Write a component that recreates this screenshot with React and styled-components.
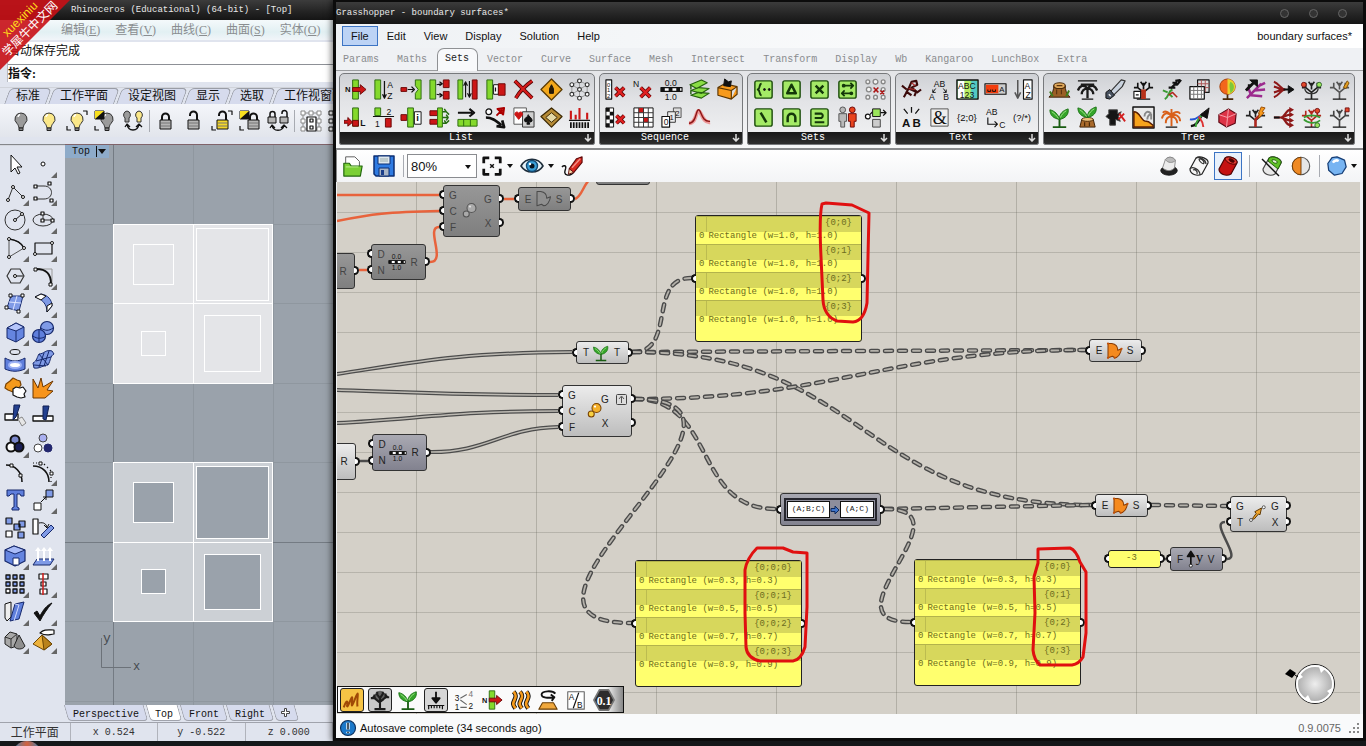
import React from "react";
import styled, { createGlobalStyle, css } from "styled-components";

/* ---------- drawing helpers ---------- */
const c = (x, y, r) => `M${x - r} ${y}a${r} ${r} 0 1 0 ${2 * r} 0a${r} ${r} 0 1 0 ${-2 * r} 0z`;
const b = (x, y, w, h) => `M${x} ${y}h${w}v${h}h${-w}z`;
const K = "#111";
const GR = "#84d92c";
const RD = "#cc1616";
const BL = "#7f9ae6";
const N = "none";
const tx = (t, x, y, s = 9, f = K, w = 400, ff = "Liberation Sans") => ({ t, x, y, s, f, w, ff });
const redX = (x, y, s) => [
  [`M${x} ${y}l${s} ${s}M${x + s} ${y}l${-s} ${s}`, N, "#5e0505", 4],
  [`M${x} ${y}l${s} ${s}M${x + s} ${y}l${-s} ${s}`, N, "#e02020", 2.4],
];
const bulb = (x, f, k = 1) => [
  [`M${x} ${3 * k + 1}a6 6 0 0 0-4 10.500c1.500 1.500 1.500 3 2 4.500h4c.5-1.500.5-3 2-4.500A6 6 0 0 0 ${x} ${3 * k + 1}z`, f, "#333", 1],
  [`M${x - 2} 19h4v2.500h-4z`, "#888", "#222", 1],
  [`M${x - 3} 8a3 3 0 0 1 2-2.500`, N, "#fff", 1.400],
];
const lock = (x, y, f, open) => [
  [open ? `M${x + 2} ${y - 4}v-1a3.500 3.500 0 0 1 7 0v5` : `M${x + 2} ${y}v-3a3.500 3.500 0 0 1 7 0v3`, N, "#111", 2],
  [b(x, y, 11, 9), f, "#111", 1],
  [`M${x + 1} ${y + 3}h9M${x + 1} ${y + 6}h9`, N, "#777", 1],
];
const brackets = [["M2 17v4h4M18 2h4v4", N, K, 1.200]];
const tree = (s) => [
  ["M12 22V14M12 15L6 10M12 15l6-5M12 12V5M6 10V5M6 10H2M18 10V5M18 10h4M12 8L9 4M12 8l3-4", N, s, 1.700],
  ["M5 22h14", N, K, 1.200],
];
const palm = (s) => [
  ["M12 21V11M12 11C8 5 3 8 2 13M12 11C11 7 5 4 3 7M12 11c1-5 7-6 9-3M12 11c4-4 9 0 9 5M12 11c-4 0-6 3-6 7M12 11c3 0 6 3 6 7M12 11V3", N, s, 2],
  ["M6 22h12", N, K, 1.200],
];
const leafy = (y) => [
  [`M12 ${y}C11 ${y - 5} 7 ${y - 9} 2 ${y - 10}c0 6 4 9 10 10zM12 ${y}c0-6 3-9 9-11 1 6-3 10-9 11z`, "#35a52a", "#1d7417", 1],
  [`M4 ${y - 8}c3 2 5 4 7 7M19 ${y - 9}c-3 2-5 4-6 7`, N, "#a3e68a", 1],
];
const greenBox = (d, fill = N, w = 2.600) => [
  ["M3 5a2 2 0 0 1 2-2h14a2 2 0 0 1 2 2v14a2 2 0 0 1-2 2H5a2 2 0 0 1-2-2z", "#a4ea66", "#1c4d0c", 1.500],
  [d, fill, "#14380a", w],
];
const can = (body, top, line) => [
  ["M3 15L9 4c4-3 13 1 12 5l-6 11c-5 3-12 0-12-5z", body, line, 1.200],
  ["M9 4c4-3 13 1 12 5-2 3-12 0-12-5z", top, line, 1],
  ["M13 5c2-1 6 1 5 3-2 1-5-1-5-3z", line, line, 1],
];

const ICONS = {
  /* list */
  item: [tx("N", 1, 15, 8, K, 700), [b(9, 2, 6, 20), GR, "#2c6b10", 1], ["M9 10h8V7l6 5-6 5v-3H9z", RD, "#6d0808", 1]],
  sort: [[b(3, 2, 6, 20), GR, "#2c6b10", 1], ["M13 3v17M11 17l2 4 2-4", N, K, 1.300], tx("A", 16, 10, 9), tx("Z", 16, 22, 9)],
  insert: [[b(1, 10, 6, 4), RD, "#6d0808", 1], ["M8 12h6M12 9l3 3-3 3", N, K, 1.300], ["M16 2h6v20h-6v-6l3-4-3-4z", GR, "#2c6b10", 1]],
  split: [[b(2, 2, 6, 20), GR, "#2c6b10", 1], ["M9 7l5-1M9 17l5 1M12 4l3 2-3 2M12 16l3 2-3 2", N, K, 1.200], [b(16, 2, 6, 8) + b(16, 14, 6, 8), RD, "#6d0808", 1]],
  weave: [[b(2, 2, 5, 20), GR, "#2c6b10", 1], ["M10 20V5M8 8l2-4 2 4M14 3v16M12 16l2 4 2-4", N, K, 1.200], [b(17, 2, 5, 20), RD, "#6d0808", 1]],
  replace: [[b(3, 2, 6, 20), GR, "#2c6b10", 1], [b(10, 7, 5, 10), "#fff", K, 1], ["M12 10v4", N, K, 1.300], [b(15, 6, 7, 12), RD, "#6d0808", 1]],
  nulls: [["M3 3l18 18M21 3C14 8 8 14 4 21", N, "#4e0404", 4], ["M3 3l18 18M21 3C14 8 8 14 4 21", N, "#d41c1c", 2.400]],
  digits: [["M12 1l11 11-11 11L1 12z", "#f3a81c", "#5a3a04", 1.300], ["M12 7l-2 4v5h4v-5z", "#2a1a04", K, 1]],
  net: [["M12 3v18M4 7l16 10M20 7L4 17M4 7l8-4 8 4v10l-8 4-8-4z", N, "#999", 1], [c(12, 3, 2) + c(12, 21, 2) + c(4, 7, 2) + c(20, 7, 2) + c(4, 17, 2) + c(20, 17, 2) + c(12, 12, 2), "#fff", "#333", 1.200]],
  length: [[b(9, 2, 6, 19), GR, "#2c6b10", 1], [b(9, 15, 6, 6), RD, "#6d0808", 1], ["M0 15h4v-3l5 5-5 4v-3H0z", RD, "#6d0808", 1], tx("L", 17, 21, 9, K, 700)],
  partition: [["M1 11h22", N, K, 1.200], [b(3, 2, 6, 8), GR, "#2c6b10", 1], [b(14, 13, 6, 9), RD, "#6d0808", 1], tx("2", 15, 9, 9), tx("1", 3, 22, 9)],
  index: [[b(1, 9, 6, 6), RD, "#6d0808", 1], [b(8, 2, 6, 20), GR, "#2c6b10", 1], ["M15 6h7v13h-7z", "#fff", K, 1], tx("i", 17, 16, 10, K, 700)],
  dispatch: [[b(2, 5, 8, 5) + b(2, 14, 8, 5), RD, "#6d0808", 1], [b(10, 2, 5, 20), GR, "#2c6b10", 1], ["M15 6h4l-2-3M15 12h6l-2-3M15 18h4l-2-3M21 12l-2 3M19 6l3 3M19 18l3-3", N, "#256b10", 1.500]],
  shift: [["M2 7h15M14 3l5 4-5 4", N, K, 2.200], [b(2, 14, 20, 7), GR, "#2c6b10", 1], ["M8 14v7M15 14v7", N, "#2c6b10", 1]],
  sift: [[c(5, 6, 3), "#fff", K, 1.300], ["M2 12c6 0 10 3 16 8M13 21l8 1-2-7", N, K, 2.800], ["M13 10l6-6M14 3l7-1-1 7z", RD, "#a00", 2]],
  cards: [["M2 2h13v17H2z", "#fff", "#555", 1], ["M11 6h12v16H11z", "#d0d0d0", "#333", 1], ["M7 14L3 9c0-4 4-3 4-1 0-2 4-3 4 1z", RD, RD, 1], ["M17 9c0 2-4 3-4 6 0 2 3 2 3.500 1l-1 3h3l-1-3c.5 1 3.500 1 3.500-1 0-3-4-4-4-6z", K, K, 1]],
  frame: [["M12 2l11 9-11 11L1 11z", "#b58a35", "#3d2a05", 1.300], ["M12 7l6 5-6 5-6-5z", "#e4d9a8", "#3d2a05", 1]],
  stats: [["M3 5v9M8 9v5M12 2v12M20 7v7", N, RD, 2.200], ["M1 15h22", N, K, 1.300], ["M3 17v6M6 17v6M9 17v6M12 17v6M15 17v6M18 17v6M21 17v6", N, K, 1.800]],
  /* sequence */
  cull: [[b(2, 2, 6, 20), "#fff", K, 1.200], tx("0", 3, 9, 6), tx("1", 3, 15, 6), tx("2", 3, 21, 6), ...redX(12, 10, 9)],
  culln: [tx("N", 1, 9, 9), ...redX(9, 10, 10)],
  range: [tx("0.0", 5, 8, 9), [b(1, 10, 22, 4), "#fff", K, 1.200], ["M1 12h4M9 12h4M17 12h4", N, K, 4], tx("1.0", 5, 23, 9)],
  series: [["M3 18l8-3 11 1-8 5zM3 13l8-3 11 1-8 5zM2 7l12-5 6 3-11 6z", "#8add45", "#26610e", 1.200], ["M3 13v4M3 7v5", N, "#26610e", 1.500]],
  random: [["M2 10l7-4 13 3-6 4zM2 10v8l14 4v-9M22 9v8l-6 5", "#f79a1c", "#5b3502", 1.200], ["M8 8l1-7 4 3 3-1-1 6z", K, K, 1]],
  cullp: [[b(2, 2, 8, 20), "#fff", K, 1], [b(2, 2, 4, 4) + b(6, 6, 4, 4) + b(2, 10, 4, 4) + b(6, 14, 4, 4) + b(2, 18, 4, 4), K, N, 0], ...redX(13, 10, 8)],
  grid: [[b(2, 2, 20, 20), "#fff", K, 1], [b(7, 2, 5, 5) + b(12, 12, 5, 5), RD, N, 0], ["M7 2v20M12 2v20M17 2v20M2 7h20M2 12h20M2 17h20", N, "#333", 1]],
  fib: [[b(14, 2, 8, 10), "#ddd", "#555", 1], tx("2", 16, 10, 8), [b(8, 6, 8, 11), "#eee", "#333", 1], tx("1", 10, 15, 8), [b(2, 11, 8, 11), "#fff", K, 1.200], tx("0", 4, 20, 9)],
  jitter: [["M1 18c8 0 7-13 10-13s4 13 12 12", N, "#e99", 4], ["M1 18c8 0 7-14 10-14s3 13 12 12", N, "#8c1616", 1.500]],
  /* sets */
  sA: [...greenBox("M10 6c-3 0-1 5-4 6 3 1 1 6 4 6", N, 2), [c(13, 12, 1) + c(18, 12, 1), K, K, 1]],
  sB: greenBox("M12 7l4.500 9h-9z"),
  sC: greenBox("M8 8l8 8M16 8l-8 8"),
  sD: [...greenBox("M9 8h9M15 5l3 3-3 3M15 16H7M9 13l-3 3 3 3", N, 1.800), [c(8, 8, 2) + c(16, 16, 2), "#14380a", N, 0]],
  sE: [[c(4, 4, 2) + c(12, 4, 2.500) + c(20, 4, 2) + c(5, 12, 2.500) + c(4, 20, 2) + c(12, 20, 2) + c(20, 12, 2) + c(20, 20, 2), "#f4f4f4", "#888", 1.400], ["M10 10l5 5M15 10l-5 5M17 13l4 4M21 13l-4 4", N, "#a11", 1.500]],
  sF: greenBox("M9 7l6 10"),
  sG: greenBox("M8 17v-5a4 4 0 0 1 8 0v5"),
  sH: greenBox("M7 8h7a2.500 2.500 0 0 1 0 4.500H7M7 17h10", N, 2.200),
  sI: [[c(7, 4, 3) + "M3 8h8v8H9v6H5v-6H3z", "#b9b9b9", "#555", 1], [c(17, 4, 3) + "M13 8h8v8h-2v6h-4v-6h-2z", "#e8431d", "#6d0808", 1]],
  sJ: [[c(4, 11, 2.500), "#fff", K, 1.300], ["M6 9l3-3M17 7h6M20 4l3 3-3 3", N, K, 1.300], [b(9, 3, 8, 8), "#9be65c", K, 1], [b(9, 14, 8, 8), "#ccc", "#444", 1]],
  /* text */
  tA: [["M4 20l5-9 3-7 5-1 1 4-6 3 5 4-2 5M7 12L2 8M9 11l9 4 4-3M6 14l6 4", N, "#3b0a0a", 2.200], ["M9 11l7 1M12 5l4 3", N, "#b03030", 1.300]],
  tB: [tx("AB", 6, 9, 9), tx("A", 1, 23, 9), tx("B", 16, 23, 9), ["M8 11l-3 4M16 11l3 4M5 12v3h3M19 12v3h-3", N, K, 1]],
  tC: [[b(1, 2, 22, 20), "#7be08c", K, 1.500], [b(2, 3, 7, 18), "#fff", N, 0], [b(9, 3, 6, 18), "#b9ee62", N, 0], [b(16, 3, 6, 18), "#53c8c4", N, 0], tx("ABC", 2, 11, 9), tx("123", 4, 21, 9)],
  tD: [[b(1, 6, 22, 11), "#ccc", K, 1.200], [b(2, 7, 13, 9), "#f23c0c", N, 0], ["M4 12v2h3v-2M9 12v2h3v-2", N, K, 1], tx("A", 16, 15, 8)],
  tE: [["M6 2v17M3 15l3 6 3-6", N, "#555", 1.600], [b(12, 2, 9, 20), "#fff", K, 1.200], tx("A", 13, 11, 9), tx("Z", 14, 21, 9)],
  tF: [tx("A", 2, 22, 12, K, 700), tx("B", 13, 22, 12, K, 700), ["M8 8L4 3M12 7V1M16 8l4-5", N, K, 1.300]],
  tG: [["M3 3h18v18H3z", "#eee", "#555", 1], tx("&", 5, 19, 19, K, 400, "Liberation Serif")],
  tH: [tx("{2;0}", 1, 16, 10)],
  tI: [tx("AB", 2, 9, 9), ["M4 12v7h10M11 16l3 3-3 3", N, K, 1.200], tx("C", 16, 23, 9)],
  tJ: [tx("(?/*)", 1, 16, 10)],
  /* tree */
  stump: [["M6 8c0 4-1 8-5 12h22c-4-4-5-8-5-12z", "#9a5f25", "#3c2006", 1], ["M6 8a6 3 0 1 0 12 0a6 3 0 1 0-12 0z", "#e0a95c", "#4b2a08", 1.200], ["M9 8h6M9 12v5M14 12v5", N, "#5c3510", 1.200], ["M2 14l3 5M22 13l-3 6", N, "#3d7d1c", 2]],
  palmcut: [["M2 3h20", N, K, 1.200], ["M12 21V11M12 11C8 6 4 8 2 13M12 11c4-5 8-3 10 2M12 11c-4 0-6 3-6 6M12 11c4 0 6 3 6 6M5 7h14", N, "#1a1a1a", 2.400], ["M6 22h12", N, K, 1.200]],
  saw: [["M5 16L18 2l4 1-3 6L9 19z", "#c9d2de", "#333", 1.200], ["M2 21v-6l4-3 5 6-5 4z", "#46505e", K, 1], ["M5 17l2 2", N, "#eee", 1.500]],
  prune: [...tree("#111"), ["M12 22V12", N, "#b8321a", 5], [b(2, 14, 7, 7), "#fff", K, 1.200], ["M4 17.500h3", N, K, 1.300]],
  vine: [["M5 22c5-3 3-8 8-10M8 15l-5-2M13 20l-4-4", N, "#3a9b33", 2], ["M11 11l4-4h3l4-5M13 5h5M9 10h7M16 3l5-1", N, K, 2.200], ["M9 18l4-3 5 5", N, "#b3261e", 1.500]],
  matrix: [[b(10, 2, 12, 13), "#ddd", K, 1.200], ["M10 6h12M10 10h12M14 2v13M18 2v13", N, "#a55", 1], [b(2, 9, 15, 13), "#fff", K, 1.300], ["M2 13h15M2 17h15M6 9v13M10 9v13M14 9v13", N, "#777", 1]],
  twotrees: [["M12 22V12M7 22h11", N, "#4b2a08", 1.800], [c(12, 9, 8), "#f3671c", "#a33d07", 1], ["M12 1a8 8 0 0 1 0 16z", "#e9d32c", N, 0], ["M15 4c5 2 5 9 0 12 0-4-2-8 0-12z", "#7dc83a", N, 0]],
  fern: [["M3 21L18 6M7 18l12 1M11 13l11-1M14 9l8-4M7 17L4 9", N, "#9c2b8e", 2.600], ["M2 13l8-8M4 8h4", N, K, 3], ["M6 2h8v7z", K, K, 1]],
  flip: [["M2 4c6 2 7 8 12 8M2 20c6-2 7-8 12-8M2 9c5 1 6 3 10 3M2 15c5-1 6-3 10-3", N, "#8e1919", 2.200], ["M12 12h7", N, K, 2], ["M17 8l6 4-6 4z", K, K, 1]],
  match: [...tree("#222"), [c(4, 7, 2.500), "#e2492b", "#711", 1], [c(20, 7, 2.500), "#9be65c", "#363", 1], ["M5 11c1 7 13 7 14 0", N, "#333", 1.400]],
  treeb: [...tree("#555"), ["M16 10l4-7 2 2-3 6z", "#e59f22", "#7a4c05", 1]],
  sprout: [["M12 22V12M5 22h14", N, "#195c12", 2], ...leafy(14)],
  graftst: [["M6 14h12l2 8H4z", "#a96a2c", "#3c2006", 1], ["M6 14a6 2 0 1 0 12 0a6 2 0 1 0-12 0z", "#ecc07a", "#4b2a08", 1], ["M9 17v4M14 17v4", N, "#4b2a08", 1.300], ...leafy(12)],
  cutter: [["M5 4h9v4l4-2-3 5 2 5-5-2v6H6v-6l-4-3 3-3z", "#151515", "#444", 1], ["M15 14l6-6M16 8l6 8", N, "#d32222", 2]],
  sunset: [[b(1, 1, 22, 22), "#e9e9e9", K, 1.500], ["M2 6c7 0 7 10 13 10 4 0 4 3 7 4v2H2z", "#f7a31d", "#5b1e02", 1.500], ["M20 14V8M20 8c-4-4-7-1-7 3M20 8c-2 1-4 3-4 6", N, "#888", 2]],
  palmred: palm("#d9601a"),
  arrows: [["M3 21c8-1 8-8 13-13", N, K, 2.500], ["M2 14c6 1 8-2 11-4", N, "#2455d6", 2], ["M8 22c0-6 3-9 6-12", N, "#3aa33a", 2], ["M16 22c0-6-3-8-5-11", N, "#d33", 2], ["M13 9l9-7-2 11z", K, K, 1]],
  gem: [["M3 9l10-6 8 5-1 10-9 4-8-5z", "#dd3346", "#5d0914", 1.200], ["M3 9l9 3 9-4M12 12l-1 10M12 12l1-9", N, "#f7a3ac", 1]],
  bolt: [...tree("#222"), ["M12 22V14l5-5", N, "#b3261e", 2.500], ["M15 8l3-7 4 1-3 4 2 1-6 6 1-5z", "#f79a1c", "#9c4d04", 1]],
  unflip: [["M2 12h7c5 0 5-8 10-8M9 12c5 0 5 8 10 8M9 12c4 0 6-3 10-3M9 12c4 0 6 3 10 3", N, "#8e1919", 2.200], ["M18 1l5 3-5 3zM18 6l5 3-5 3zM18 12l5 3-5 3zM18 17l5 3-5 3z", "#8e1919", N, 0], ["M2 12h6", N, K, 2]],
  mirror: [...tree("#b3261e"), ["M4 12c4-3 12-3 17 0M4 14c4 4 12 5 17 1", N, "#3a9b33", 1.800], [c(18, 5, 2.500), "#e2492b", "#711", 1], [c(18, 20, 2.500), "#9be65c", "#363", 1]],
  treered: [...tree("#444"), [b(18, 2, 4, 4), "#e2492b", "#711", 1]],
  /* rhino toolbar */
  bulbOff: bulb(12, "#9b9b9b"),
  bulbOn: bulb(12, "#fbe889"),
  bulbSel: [...bulb(12, "#fbe889"), ...brackets],
  bulbInv: [...bulb(14, "#9b9b9b"), [b(2, 2, 9, 8), K, K, 1], ["M2 2h9L2 10z", "#f8e020", N, 0], ["M2 17v4h4", N, K, 1.200]],
  bulbSwap: [["M6 2a4 4 0 0 0-2 7v4h4V9a4 4 0 0 0-2-7z", "#9b9b9b", "#333", 1], ["M18 2a4 4 0 0 0-2 7v4h4V9a4 4 0 0 0-2-7z", "#fbe889", "#333", 1], ["M6 15c1 8 11 8 12 0M4 18l2-3 3 3M15 18l3-3 3 3", N, K, 1.300]],
  lock: lock(6, 11, "#b5b5b5"),
  unlock: lock(6, 11, "#b5b5b5", true),
  lockSel: [...lock(7, 11, "#f6d828", true), ...brackets],
  lockInv: [...lock(10, 11, "#b5b5b5"), [b(2, 2, 9, 8), K, K, 1], ["M2 2h9L2 10z", "#f8e020", N, 0], ["M2 17v4h4", N, K, 1.200]],
  lockSwap: [["M4 8V5a2.500 2.500 0 0 1 5 0v3M16 5V4a2.500 2.500 0 0 1 5 0v4", N, K, 1.500], [b(2, 8, 8, 6) + b(14, 8, 8, 6), "#b5b5b5", K, 1], ["M6 16c1 7 11 7 12 0M4 19l2-3 3 3M15 19l3-3 3 3", N, K, 1.300]],
  points: [["M4 4h16v16H4z", N, "#888", 1], [b(2, 2, 4, 4) + b(10, 2, 4, 4) + b(18, 2, 4, 4) + b(2, 10, 4, 4) + b(18, 10, 4, 4) + b(2, 18, 4, 4) + b(18, 18, 4, 4), "#fff", "#888", 1], [b(8, 8, 9, 14) + b(11, 10, 3, 3) + b(11, 17, 3, 3), "#fff", K, 1.200]],
  points2: [[b(2, 2, 4, 4) + b(2, 10, 4, 4) + b(2, 18, 4, 4), "#fff", K, 1]],
  /* palette */
  cursor: [["M8 3v17l4-4 3 6 2-1-3-6h5z", "#fff", K, 1]],
  dot: [[c(12, 12, 2), "#fff", K, 1]],
  poly: [["M5 20l5-13 10 10", N, "#333", 1], [c(5, 20, 1.500) + c(10, 7, 1.500) + c(20, 17, 1.500), "#fff", K, 1]],
  curve: [["M5 6h8c10 0 10 13 0 13H5", N, "#333", 1], [b(3, 5, 3, 3) + b(3, 17, 3, 3) + b(17, 2, 3, 3) + b(19, 19, 3, 3), "#fff", K, 1.200]],
  circle: [[c(12, 12, 10), N, "#333", 1], ["M12 12l7-6", N, K, 1], [c(12, 12, 1.500) + c(19, 6, 1.500), "#fff", K, 1]],
  ellipse: [["M2 12a10 6 0 1 0 20 0a10 6 0 1 0-20 0zM12 12h9M12 12V6", N, "#333", 1], [b(10, 4, 3, 3) + b(10, 11, 3, 3) + b(20, 11, 3, 3), "#fff", K, 1.200]],
  arc: [["M6 3C14 4 19 8 21 12L6 21z", N, "#555", 1], ["M6 3C14 4 19 8 21 12", N, K, 1.300], [c(6, 3, 1.500) + c(21, 12, 1.500) + c(6, 21, 1.500), "#fff", K, 1]],
  rect: [[b(4, 7, 17, 11), N, K, 1.200], [c(4, 18, 1.500) + c(21, 7, 1.500), "#fff", K, 1]],
  hexa: [["M4 12l4-7h9l4 7-4 7H8z", N, "#333", 1.200], ["M12 12h8", N, K, 1], [c(12, 12, 1.500), "#fff", K, 1]],
  fillet: [["M5 5h16v16", N, "#999", 1], ["M5 5c11 0 15 5 15 15", N, K, 2], [b(3, 4, 3, 3) + b(18, 19, 3, 3), "#fff", K, 1]],
  srf: [["M8 4h12l-4 15-12-3z", BL, "#1c2f74", 1], ["M14 4l-4 14M6 10l12 1", N, "#dfe6ff", 1], [b(6, 2, 3, 3) + b(18, 2, 3, 3) + b(2, 14, 3, 3) + b(14, 18, 3, 3), "#fff", K, 1]],
  patch: [["M4 5l6-3c7 1 11 6 11 12l-5 6c0-8-5-13-12-15z", BL, "#1c2f74", 1], ["M4 5l6-3 5 2-5 4zM21 14l-5 6v-6l5-3z", "#fff", K, 1]],
  box: [["M4 8l9-5 8 4v10l-8 5-9-4z", "#6585e0", "#16286b", 1], ["M4 8l9-5 8 4-8 4z", "#b5c5fa", "#16286b", 1], ["M13 11v11", N, "#16286b", 1]],
  spheres: [[c(16, 8, 6.500), BL, "#16286b", 1.200], [c(8, 16, 6.500), "#5f7fdc", "#16286b", 1.200], ["M2 16c4 3 9 3 13 0M8 10v12M10 8c4 3 8 3 12 0", N, "#16286b", 1]],
  tube: [["M7 4a5 2.500 0 1 0 10 0a5 2.500 0 1 0-10 0z", N, K, 1], ["M2 10c7 4 13 4 20 0v11c-7 3-13 3-20 0z", "#5f7fdc", "#16286b", 1], ["M6 17a6 3 0 1 0 12 0a6 3 0 1 0-12 0z", "#fff", "#9db2f5", 2]],
  mesh: [["M8 6c5 0 7-5 13-3l2 3c-4 2-3 6-6 11-5 0-8 4-14 3l-1-5c4-2 4-6 6-9z", BL, "#16286b", 1], ["M13 5L8 19M18 3l-5 15M5 13l15-4M3 17l12 1M8 6l9 11", N, "#16286b", 1]],
  explode: [["M3 8l4-3 3-3 4 2 3 1 1 4-3 4-5 3-5-2-3-2z", "#f59a1b", "#7a4302", 1.200], ["M10 13l3-2 4 1 3-1 3 4-2 3 1 3-4 1-4-1-4-2z", "#fff", K, 1.200]],
  burst: [["M2 3l5 9 3-10 2 9 10-6-6 9 6 1-8 7H2z", "#f7941c", "#6b3600", 1]],
  trim: [["M2 10h13v6H2z", "#fff", K, 1.300], ["M11 1h6l-4 12-3 3z", "#23408f", "#101f52", 1], ["M15 15l4-2 4 6-4 3z", "#e6e6e6", "#888", 1]],
  splitp: [["M2 12h20v5H2z", "#fff", K, 1.300], ["M12 2h6l-3 14-3-1z", "#23408f", "#101f52", 1]],
  join: [[c(12, 8, 4.500), "#7986cb", K, 2], [c(8, 15, 4.500), "#fff", K, 2], [c(16, 15, 4.500), "#1b1f57", K, 2]],
  group: [[c(12, 6, 4), "#a9aff0", "#444", 1], [c(7, 16, 4), "#fff", "#444", 1], [c(17, 16, 4), "#23276e", "#23276e", 1]],
  pton: [["M3 5c9 0 16 7 16 17", N, K, 1.600], [b(7, 4, 3, 3) + b(16, 14, 3, 3), "#fff", K, 1]],
  ptoff: [["M2 6c10 0 16 7 16 16", N, K, 1.600], ["M2 3h1M5 3h1M13 4l1 1M16 7l1 1M19 10l1 1M20 17v1M20 21v1", N, K, 1.200], [b(8, 2, 3, 3) + b(19, 12, 3, 3), "#fff", K, 1]],
  text: [["M4 2h17v6h-3l-1-2h-3v13l2 1v2H9v-2l2-1V6H8L6 8H4z", "#5f7fdc", "#16286b", 1]],
  move: [[b(3, 15, 7, 7), "#fff", K, 1], [b(15, 2, 7, 7), BL, K, 1], ["M10 14l5-5M12 9h3v3", N, K, 1]],
  copy: [[b(3, 2, 6, 6) + b(11, 8, 6, 6) + b(16, 5, 6, 6) + b(15, 16, 6, 6), BL, K, 1.200], [b(3, 15, 6, 6), "#fff", K, 1.200]],
  rotate: [[b(2, 3, 5, 15), "#fff", K, 1.200], ["M8 7c5-1 7 1 8 4M13 9l3 3 2-4", N, K, 1], ["M10 19l10-10 3 3-10 10z", BL, "#16286b", 1]],
  solid: [["M2 6l9-4 11 4v11l-10 5-10-5z", "#6585e0", "#16286b", 1.200], ["M2 6l9-4 11 4-10 4z", "#a9bcf8", "#16286b", 1], [b(10, 14, 6, 7), "#fff", "#16286b", 1]],
  extrude: [["M2 21l4-6h17l-4 6z", BL, "#16286b", 1], ["M7 17V5M13 17V5M19 17V5", N, "#fff", 2], ["M4 7l3-4 3 4zM10 7l3-4 3 4zM16 7l3-4 3 4z", "#fff", N, 0]],
  array: [[b(3, 3, 4, 4) + b(10, 3, 4, 4) + b(17, 3, 4, 4) + b(3, 10, 4, 4) + b(10, 10, 4, 4) + b(17, 10, 4, 4) + b(10, 17, 4, 4) + b(17, 17, 4, 4), BL, K, 1.300], [b(3, 17, 4, 4), "#fff", K, 1.300]],
  align: [[b(8, 2, 9, 5) + b(10, 10, 5, 4) + b(9, 17, 7, 5), "#fff", K, 1.200], ["M12 1v22", N, "#c22", 1.600]],
  tools: [["M2 4l6-2v15l-4 4-2-3z", "#eee", K, 1], ["M12 4l9-2-5 17-9 2z", "#5f7fdc", "#16286b", 1], ["M12 4l4 1-5 16", N, "#cfd9ff", 1]],
  check: [["M3 13l3-2 3 5C12 10 16 5 21 3 16 9 12 15 9 21z", K, K, 1]],
  solids: [["M2 9l5-5 7 2v12l-6 2-6-4z", "#a8a8a8", "#222", 1], ["M2 9l6 2 6-5M8 11v9", N, "#333", 1], ["M16 7l6 11c-2 4-9 4-11 0z", "#8f8f8f", "#222", 1]],
  render: [["M2 16l9-9 10 9-8 6z", "#edb23b", "#6b4503", 1], ["M11 7l2 15 8-6z", "#b9821b", "#6b4503", 1], ["M9 5c4-4 8-3 14-3v4c-5 0-6 3-14-1z", "#fff", K, 1.200]],
  /* canvas toolbar */
  open: [["M4 2h10l5 5v13H4z", "#fff", "#555", 1], ["M2 9h6l2 3h12l-2 11H2z", "#7bcf35", "#22680d", 1.300], ["M4 13h14", N, "#c2f29a", 1]],
  save: [["M2 2h20v20H4l-2-2z", "#2f7be2", "#0c2f73", 1.500], [b(6, 2, 12, 8), "#dfe8ee", "#0c2f73", 1], [b(7, 14, 10, 8), "#a9b5c6", "#0c2f73", 1], [b(9, 16, 3, 5), "#1b3f8b", N, 0], ["M8 5h8M8 7h8", N, "#9aa", 1]],
  focus: [["M3 9V3h6M15 3h6v6M21 15v6h-6M9 21H3v-6", N, K, 3], ["M10 10l4 4M14 10l-4 4", N, K, 1.600]],
  eye: [["M1 12c5-9 17-9 22 0-5 8-17 8-22 0z", "#e6f3fa", "#1e2d3a", 1.600], [c(12, 12, 5.500), "#3ba0d8", "#124a73", 1.400], [c(12, 12, 2.500), "#07141f", N, 0], [c(10, 10, 1.200), "#fff", N, 0]],
  pencil: [["M1 13c2-2 5-2 4 2-1 3-2 6 2 7 3 0 6-1 7-4", N, K, 1.500], ["M9 15L17 4l6-2v6L14 19c-2 1-4-1-5-4z", "#d8281f", "#5d0909", 1.200], ["M9 15l5 4-6 2z", "#f6d9a8", "#5d0909", 1], ["M12 14l9-10", N, "#f58f86", 1.500]],
  canGhost: [["M3 17a9 5 0 1 0 18 0a9 5 0 1 0-18 0z", "#222", K, 1], ["M5 14L8 5c3-4 9-3 11 1l-1 8c-3 4-9 4-13 0z", "#ececec", "#888", 1], ["M8 5c3 4 8 4 11 1-2-4-8-5-11-1z", "#bbb", "#888", 1]],
  canWire: [["M3 15L9 4c4-3 13 1 12 5l-6 11c-5 3-12 0-12-5z", "#f6f6f6", "#222", 1.200], ["M9 4c4-2 10 2 10 6M3 15c2-3 10 0 10 6M12 5c2-1 5 2 5 4s-5-1-5-4zM6 16c2-1 5 1 4 4", N, "#333", 1.200]],
  canRed: can("#c51212", "#e03a32", "#4d0303"),
  canGreen: [...can("#e8e8e8", "#ddd", "#444"), ["M9 4c4-3 13 1 12 5l-3 6L8 7z", "#5fc027", "#225f0a", 1], ["M12 6c2-1 6 1 5 3-2 1-5-1-5-3z", "#eaf6df", "#225f0a", 1], ["M2 5l17 17", N, K, 1.400]],
  half: [[c(12, 12, 9.500), "#e6e6e6", "#555", 1.200], ["M12 2.500a9.500 9.500 0 0 0 0 19z", "#ef8a25", "#703a02", 1]],
  ball: [["M12 1l9 4 2 8-5 8-9 2-7-6-1-8 5-7z", "#77b4f2", "#153d75", 1.500], ["M7 8c2-3 5-3 7-2", N, "#fff", 3]],
  info: [[c(12, 12, 10), "#1b78c9", "#0b2f5c", 1.500], ["M12 5v9M12 17v2", N, "#fff", 4.500], ["M12 5v9M12 17v2", N, "#123", 2]],
  sketch: [["M3 20c2-6 4-8 4-5s-1 4 0 4 4-10 5-10-1 9 0 9 5-13 6-13-1 10 0 14", N, "#a04a06", 2.200]],
  darktree: [["M12 22V10M12 15l-6-5M12 14l6-5M6 10V6M6 10H2M18 9V5M18 9h4M12 10L8 5M12 10l4-6M9 7V3M15 6V3M4 8l3 2M20 7l-3 3M6 22h12", N, "#1c1c1c", 2.300], [c(12, 8, 6), "rgba(30,30,30,.6)", N, 0]],
  down: [["M12 3v10M8 10l4 5 4-5z", K, K, 2], ["M3 18h18M4 18v4M7 18v3M10 18v3M13 18v3M16 18v3M19 18v4", N, K, 1.300]],
  nums: [tx("3", 2, 13, 9), tx("4", 17, 9, 9, "#777"), tx("1", 2, 23, 9), tx("2", 17, 22, 9), ["M8 10l7-4M8 12l7 5M8 20h7", N, "#666", 1.200]],
  waves: [["M5 3c3 3 3 5 1 9s-2 5 1 9M12 3c3 3 3 5 1 9s-2 5 1 9M19 3c3 3 3 5 1 9s-2 5 1 9", N, K, 5], ["M5 3c3 3 3 5 1 9s-2 5 1 9M12 3c3 3 3 5 1 9s-2 5 1 9M19 3c3 3 3 5 1 9s-2 5 1 9", N, "#f59a1b", 3]],
  swirl: [["M20 5c-3-4-15-3-15 1s8 4 13 3M15 6l4 3-3 4", N, K, 2], ["M6 15h12l4 7H2z", "#f0a83c", "#6b3e04", 1.200]],
  ab: [["M3 3h18v19H3z", "#fff", "#666", 1.200], tx("A", 4, 12, 9), tx("B", 13, 21, 9), ["M15 4L9 21", N, K, 1.300]],
  hexnum: [["M7 1h10l6 11-6 11H7L1 12z", "#2c2c2c", "#777", 1.800], tx("0.1", 4, 17, 13, "#fff", 700, "Liberation Serif")],
  /* node glyphs */
  scale: [[c(14, 8, 6), "#f5b02a", "#7a4302", 1.400], [c(7, 16, 4), "#f8d040", "#7a4302", 1.400], [c(12, 6, 1.500), "#fff", N, 0]],
  scaleOff: [[c(14, 8, 6), "#aaa", "#555", 1.400], [c(7, 16, 4), "#aaa", "#555", 1.400], [c(12, 6, 1.500), "#ddd", N, 0]],
  bsrf: [["M4 2h5c6 1 8 5 8 9l5-2c-1 7-5 12-9 12l-3-2-6 2z", "#f58a1f", "#8a3d05", 1.400], [c(4, 21, 1.500) + c(4, 2, 1.500) + c(22, 9, 1.500) + c(13, 21, 1.500), "#c2500a", N, 0]],
  bsrfOff: [["M4 2h5c6 1 8 5 8 9l5-2c-1 7-5 12-9 12l-3-2-6 2z", "#8f8f8f", "#4a4a4a", 1.400]],
  moveTo: [["M6 18l5-7-2-2 9-5-2 9-2-1-6 7z", "#f0a52c", "#5b3502", 1.300], [c(4, 20, 2) + c(21, 3, 2), "#fff", "#555", 1.300]],
  unity: [["M7 19V7M3 9l4-6 4 6z", K, K, 2], [c(7, 20, 1.800), "#fff", K, 1], tx("y", 13, 15, 18, K, 400, "Liberation Serif")],
};

const Svg = styled.svg`
  display: block;
  flex: none;
  width: ${(p) => p.$size}px;
  height: ${(p) => p.$size}px;
`;

function Icon({ name, size = 22 }) {
  return (
    <Svg viewBox="0 0 24 24" $size={size} aria-hidden="true">
      {ICONS[name].map((s, i) =>
        s.t !== undefined ? (
          <text key={i} x={s.x} y={s.y} fontSize={s.s} fill={s.f} fontWeight={s.w} fontFamily={s.ff}>{s.t}</text>
        ) : (
          <path key={i} d={s[0]} fill={s[1]} stroke={s[2]} strokeWidth={s[3]} strokeLinejoin="round" />
        )
      )}
    </Svg>
  );
}

/* ---------- shared styles ---------- */
const Global = createGlobalStyle`
  *, *::before, *::after { box-sizing: border-box; }
  body { margin: 0; background: #101010; font-family: "Liberation Sans", "Noto Sans CJK SC", sans-serif; font-size: 11px; color: #111; }
  button, input, select { font: inherit; color: inherit; margin: 0; padding: 0; border: 0; background: none; }
`;
const mono = css`
  font-family: "Liberation Mono", "Noto Sans CJK SC", monospace;
  font-size: 10px;
`;
const song = css`
  font-family: "Liberation Serif", "Noto Sans CJK SC", serif;
  font-size: 12px;
`;

const Desktop = styled.div`
  display: flex;
  flex-direction: column;
  min-height: 100vh;
  overflow: hidden;
`;
const Windows = styled.div`
  display: flex;
  flex: 1;
`;
const Taskbar = styled.footer`
  position: relative;
  height: 5px;
  overflow: hidden;
  background: #15181a;
`;
const Orb = styled.span`
  display: block;
  width: 30px;
  height: 30px;
  margin-left: 12px;
  border-radius: 50%;
  background: radial-gradient(circle at 50% 10%, #d8603a, #4d7fa8 40%, #9fc4dc 60%);
`;

/* ---------- Rhino window ---------- */
const Rhino = styled.section`
  position: relative;
  display: flex;
  flex-direction: column;
  flex: 0 0 333px;
  min-width: 0;
  overflow: hidden;
  background: #e0e4ee;
`;
const Title = styled.header`
  ${mono}
  font-size: 9px;
  display: flex;
  align-items: center;
  justify-content: space-between;
  height: ${(p) => p.$h}px;
  padding-left: ${(p) => p.$pad}px;
  color: #e8e8e8;
  white-space: nowrap;
  background: linear-gradient(#3c3c3c, #232323 60%, #151515);
`;
const RhinoMenu = styled.nav`
  ${song}
  display: flex;
  align-items: center;
  gap: 15px;
  height: 20px;
  padding-left: 61px;
  background: linear-gradient(#f4f9fb, #e2f0f3 60%, #f1f5f9);
  color: #8a8d90;
  white-space: nowrap;
`;
const PlainButton = styled.button`
  line-height: 16px;
  white-space: nowrap;
`;
const Command = styled.div`
  margin: 2px 0 5px 7px;
  border-left: 1px solid #b6bac2;
  background: #fff;
  ${song}
`;
const History = styled.div`
  height: 23px;
  line-height: 19px;
  border-bottom: 1px solid #8d9096;
`;
const Prompt = styled.label`
  display: flex;
  align-items: center;
  gap: 2px;
  height: 17px;
  font-weight: 700;
  line-height: 14px;
  input {
    flex: 1;
    min-width: 0;
    outline: 0;
  }
`;
const RhinoTabs = styled.div`
  ${song}
  display: flex;
  flex: none;
  height: 17px;
  padding-left: 7px;
  gap: 2px;
  border-top: 1px solid #d0d3da;
`;
const RhinoTab = styled.button`
  position: relative;
  flex: none;
  height: 16px;
  padding: 0 9px;
  line-height: 16px;
  z-index: 0;
  &::before {
    content: "";
    position: absolute;
    inset: 0;
    z-index: -1;
    border: 1px solid #9a9da6;
    border-bottom: 0;
    border-radius: 5px 5px 0 0;
    background: #d6dbed;
    transform: skewX(-20deg);
  }
`;
const RhinoTools = styled.div`
  display: flex;
  align-items: center;
  flex: none;
  height: 33px;
  margin-bottom: 7px;
  padding-left: 7px;
  background: linear-gradient(#f4f6fa, #e2e5ec);
`;
const ToolButton = styled.button`
  position: relative;
  display: flex;
  flex: none;
  align-items: center;
  justify-content: center;
  width: 28px;
  height: 28px;
  ${(p) => p.$flyout && css`
    &::after {
      content: "";
      position: absolute;
      right: 0;
      bottom: 0;
      border: 3px solid transparent;
      border-right-color: #666;
      border-bottom-color: #666;
    }
  `}
`;
const Rule = styled.span`
  flex: none;
  width: 1px;
  height: 22px;
  margin: 0 ${(p) => p.$m || 3}px;
  background: #a8abb2;
`;
const RhinoBody = styled.div`
  display: flex;
  flex: 1;
  min-height: 0;
`;
const Palette = styled.aside`
  flex: none;
  width: 65px;
  padding: 4px 0 0 1px;
  border-top: 2px groove #d5d8df;
`;
const PaletteGrid = styled.div`
  display: grid;
  grid-template-columns: 28px 28px;
  grid-auto-rows: 28px;
`;
const ViewColumn = styled.div`
  display: flex;
  flex-direction: column;
  flex: 1;
  min-width: 0;
`;
const Viewport = styled.div`
  position: relative;
  flex: 1;
  background: #9aa2ab;
  border-top: 1px solid #80636a;
`;
const ViewSvg = styled.svg`
  position: absolute;
  inset: 0;
  width: 100%;
  height: 100%;
`;
const ViewLabel = styled.button`
  ${mono}
  position: relative;
  display: flex;
  align-items: center;
  gap: 6px;
  height: 13px;
  padding: 0 3px 0 7px;
  background: #8eabc9;
`;
const ViewTabs = styled.div`
  ${mono}
  display: flex;
  height: 17px;
  padding-left: 1px;
  gap: 2px;
`;
const ViewTab = styled.button`
  position: relative;
  height: 16px;
  padding: 2px 7px 0;
  z-index: 0;
  &::before {
    content: "";
    position: absolute;
    inset: 0;
    z-index: -1;
    border: 1px solid #a0a3ac;
    border-top: 0;
    border-radius: 0 0 4px 4px;
    background: ${(p) => (p.$on ? "#fff" : "#d6dbed")};
    transform: skewX(16deg);
  }
`;
const RhinoStatus = styled.div`
  ${mono}
  display: flex;
  flex: none;
  height: 19px;
  border-top: 1px solid #a0a3ac;
  color: #333;
`;
const StatusCell = styled.span`
  display: flex;
  align-items: center;
  justify-content: center;
  width: ${(p) => p.$w}px;
  border-right: 1px solid #b0b3bb;
  font-size: ${(p) => (p.$cjk ? 12 : 10)}px;
`;
const Watermark = styled.div`
  position: absolute;
  top: 0;
  left: 0;
  width: 70px;
  height: 70px;
  overflow: hidden;
  clip-path: polygon(0 0, 100% 0, 0 100%);
  background: rgba(200, 16, 22, 0.9);
`;
const Ribbon = styled.div`
  position: absolute;
  top: 10px;
  left: -25px;
  width: 100px;
  text-align: center;
  line-height: 14px;
  font-size: 12px;
  color: #fff;
  transform: rotate(-45deg);
  span {
    display: block;
    color: #ffdf1b;
  }
`;

/* ---------- Grasshopper window ---------- */
const Hopper = styled.section`
  display: flex;
  flex-direction: column;
  flex: 1;
  min-width: 0;
  position: relative;
  border: solid #0c0c0c;
  border-width: 2px 3px 3px 3px;
  box-shadow: -2px 0 6px rgba(0, 0, 0, 0.5);
  background: #f0f2f4;
`;
const WinButtons = styled.div`
  display: flex;
  gap: 20px;
  padding-right: 16px;
`;
const WinButton = styled.button`
  width: 9px;
  height: 9px;
  border: 1px solid #666;
  border-radius: 50%;
  background: #333;
`;
const HopperMenu = styled.nav`
  display: flex;
  align-items: center;
  height: 24px;
  padding-left: 6px;
  background: linear-gradient(90deg, #eef1f4, #fff 80%);
`;
const MenuItem = styled.button`
  height: 20px;
  padding: 0 8px;
  border: 1px solid ${(p) => (p.$on ? "#3c74c4" : "transparent")};
  background: ${(p) => (p.$on ? "#bcd3f5" : "none")};
`;
const DocName = styled.span`
  margin-left: auto;
  padding-right: 11px;
`;
const Tabs = styled.div`
  ${mono}
  display: flex;
  align-items: flex-end;
  height: 23px;
  border-bottom: 1px solid #9a9c9e;
  background: #eff1f4;
`;
const Tab = styled.button`
  flex: none;
  height: 22px;
  padding: 0 11px 0 7px;
  color: #8a8c8f;
  ${(p) => p.$on && css`
    height: 23px;
    margin: 0 2px -1px -1px;
    padding: 0 8px 4px 7px;
    color: #222;
    background: #f8f9fb;
    border: 1px solid #8f9194;
    border-bottom: 0;
    border-radius: 7px 7px 0 0;
  `}
`;
const Groups = styled.div`
  display: flex;
  gap: 4px;
  height: 79px;
  padding: 2px 3px 0 3px;
  border-bottom: 2px solid #888a8c;
  background: linear-gradient(#e4e5e8, #f6f7f8);
`;
const Group = styled.section`
  display: flex;
  flex-direction: column;
  flex: none;
  height: 72px;
  border: 1px solid #77797c;
  border-radius: 5px 5px 2px 2px;
  overflow: hidden;
  background: linear-gradient(#cfd1d5, #e3e4e7 40%, #f2f3f4);
`;
const GroupGrid = styled.div`
  display: grid;
  grid-template-columns: repeat(${(p) => p.$cols}, 28px);
  grid-auto-rows: 28px;
  padding: 1px 1px 0;
`;
const GroupName = styled.h2`
  ${mono}
  position: relative;
  margin: auto 0 0;
  height: 12px;
  line-height: 11px;
  font-weight: 400;
  text-align: center;
  padding-right: 12px;
  color: #fff;
  background: linear-gradient(#181818, #2e2e2e);
  svg {
    position: absolute;
    right: 2px;
    top: 2px;
  }
`;
const ToolBar = styled.div`
  display: flex;
  align-items: center;
  height: 32px;
  padding: 0 3px 0 1px;
  border-left: 1px solid #888;
  background: linear-gradient(#fff, #f3f4f6);
`;
const BarButton = styled.button`
  display: flex;
  align-items: center;
  justify-content: center;
  gap: 4px;
  height: 28px;
  padding: 0 ${(p) => p.$p || 3}px;
  border: 1px solid ${(p) => (p.$on ? "#3c74c4" : "transparent")};
  background: ${(p) => (p.$on ? "#e9f1fb" : "none")};
`;
const ZoomField = styled.label`
  position: relative;
  width: 70px;
  select {
    appearance: none;
    display: block;
    width: 100%;
    height: 24px;
    padding-left: 3px;
    border: 1px solid #8a8c90;
    border-radius: 0;
    background: #fff;
    font-size: 13px;
  }
  svg {
    position: absolute;
    right: 6px;
    top: 11px;
  }
`;
const Push = styled.span`
  margin-left: auto;
`;
const Canvas = styled.main`
  position: relative;
  flex: 1;
  margin-right: 3px;
  margin-left: 1px;
  overflow: hidden;
  background-color: #d4d0c8;
  background-image: linear-gradient(90deg, rgba(90, 90, 80, 0.28) 1px, transparent 1px),
    linear-gradient(rgba(90, 90, 80, 0.24) 1px, transparent 1px);
  background-size: 120px 40px;
  background-position: 79px 30px;
`;
const Layer = styled.svg`
  position: absolute;
  inset: 0;
  width: 100%;
  height: 100%;
  pointer-events: none;
`;
const FILL = {
  off: "linear-gradient(#979797, #7f7f7f)",
  on: "linear-gradient(#ececec, #bdbdbd)",
  hidden: "linear-gradient(#a9a9b2, #82828f)",
};
const NodeBox = styled.div`
  position: absolute;
  left: ${(p) => p.$x}px;
  top: ${(p) => p.$y}px;
  width: ${(p) => p.$w}px;
  height: ${(p) => p.$h}px;
  display: flex;
  align-items: stretch;
  justify-content: space-between;
  padding: 1px 0;
  border: 1px solid #333;
  border-radius: 3px;
  background: ${(p) => FILL[p.$tone]};
  color: ${(p) => (p.$tone === "off" ? "#444" : "#222")};
  font-size: 10px;
`;
const Ports = styled.div`
  display: flex;
  flex: none;
  flex-direction: column;
  width: ${(p) => (p.$out ? 22 : 18)}px;
`;
const Port = styled.span`
  position: relative;
  display: flex;
  flex: 1;
  align-items: center;
  justify-content: center;
  gap: 7px;
  ${(p) => p.$wide && css`margin-left: -12px;`}
  &::after {
    content: "";
    position: absolute;
    ${(p) => p.$side}: -5px;
    top: calc(50% - 5px);
    width: 5px;
    height: 9px;
    border: 2px solid #111;
    border-${(p) => (p.$side === "left" ? "right" : "left")}: 0;
    border-radius: ${(p) => (p.$side === "left" ? "5px 0 0 5px" : "0 5px 5px 0")};
    background: #fff;
  }
`;
const Glyph = styled.div`
  display: flex;
  align-items: center;
  margin: 0 -5px;
`;
const PanelBox = styled.div`
  ${mono}
  font-size: 9px;
  position: absolute;
  left: ${(p) => p.$x}px;
  top: ${(p) => p.$y}px;
  width: ${(p) => p.$w}px;
  height: ${(p) => p.$h}px;
  border: 1px solid #222;
  border-radius: 3px;
  background: #ffff6e;
  color: #6c6c20;
  white-space: nowrap;
`;
const PathRow = styled.div`
  height: 16px;
  line-height: 12px;
  padding-right: 9px;
  text-align: right;
  border-top: 1px solid #b3b34c;
  background: linear-gradient(90deg, transparent 10px, #bcbc50 10px, #bcbc50 11px, transparent 11px), #d7d75c;
`;
const ItemRow = styled.div`
  height: 12px;
  line-height: 9px;
  padding-left: 3px;
  span {
    padding-left: 4px;
  }
`;
const Short = styled.div`
  text-align: center;
  line-height: 15px;
  padding-right: 6px;
`;
const Mapper = styled.div`
  display: flex;
  align-items: center;
  flex: 1;
  margin: 3px;
  padding: 1px;
  border: 2px solid #26262e;
  background: #8e8e9c;
`;
const MapField = styled.span`
  ${mono}
  font-size: 8px;
  flex: ${(p) => p.$grow} 0 0;
  height: 17px;
  line-height: 14px;
  text-align: center;
  border: 1px solid #111;
  background: #fff;
`;
const Dock = styled.div`
  position: absolute;
  left: 0;
  bottom: 1px;
  display: flex;
  align-items: center;
  width: 287px;
  height: 27px;
  border: 1px solid #111;
  background: linear-gradient(90deg, #fafafa 94%, #888);
`;
const DockButton = styled.button`
  display: flex;
  flex: none;
  align-items: center;
  justify-content: center;
  width: 24px;
  height: 24px;
  margin: 0 2px;
  border-radius: 3px;
  border: 1px solid ${(p) => (p.$bg ? "#222" : "transparent")};
  background: ${(p) => p.$bg || "none"};
`;
const Compass = styled.svg`
  position: absolute;
  right: 22px;
  bottom: 7px;
  width: 56px;
  height: 46px;
`;
const Status = styled.footer`
  display: flex;
  align-items: center;
  gap: 3px;
  height: 24px;
  padding: 4px 3px 0;
  background: #f9fafb;
`;
const Version = styled.span`
  margin-left: auto;
  margin-right: 5px;
  color: #666;
`;
const EdgePorts = styled.div`
  position: absolute;
  inset: 0;
  display: flex;
  justify-content: space-between;
`;

/* ---------- data ---------- */
const GROUPS = [
  ["List", 9, "item sort insert split weave replace nulls digits net length partition index dispatch shift sift cards frame stats"],
  ["Sequence", 5, "cull culln range series random cullp grid fib jitter"],
  ["Sets", 5, "sA sB sC sD sE sF sG sH sI sJ"],
  ["Text", 5, "tA tB tC tD tE tF tG tH tI tJ"],
  ["Tree", 11, "stump palmcut saw prune vine matrix twotrees fern flip match treeb sprout graftst cutter sunset palmred arrows gem bolt unflip mirror treered"],
];
const PALETTE =
  "cursor dot poly curve circle ellipse arc rect hexa fillet srf patch box spheres tube mesh explode burst trim splitp join group pton ptoff text move copy rotate solid extrude array align tools check solids render".split(" ");
const NO_FLYOUT = ["cursor", "explode", "burst", "trim", "splitp", "group", "pton", "text", "copy", "rotate"];

const SOLID = [
  "M0 192C80 180 120 171 235 170",
  "M0 208C70 210 120 213 221 213",
  "M0 241C80 237 120 229 221 229",
  "M92 270C150 271 165 246 221 245",
];
const DASHED = [
  "M296 170C340 170 310 96 354 96",
  "M296 170L748 168",
  "M296 170C530 170 520 323 754 323",
  "M298 217C500 217 548 168 748 168",
  "M298 217C380 217 355 327 439 327",
  "M298 217C468 217 126 441 294 441",
  "M548 327L754 323",
  "M548 327C636 327 484 440 573 440",
  "M815 323L889 324",
];
const ORANGE = [
  "M0 13L102 13",
  "M0 39C35 32 50 30 102 29",
  "M93 80C110 80 88 45 102 45",
  "M22 88H30",
  "M167 17H177",
  "M238 17C245 14 245 6 252 -2",
];
const MARKS = [
  "M485 22L489 21L515 23L532 31L531 75L530 121Q527 139 516 140L500 139Q487 134 486 118L484 75Q482 35 485 22Z",
  "M420 366L446 366L456 370L470 371L470 425L468 465Q464 478 456 479L423 479Q410 476 409 465L408 431L408 388Q410 376 420 366Z",
  "M701 367L733 366Q739 368 743 380L749 390L749 451L746 475Q742 482 735 483L703 483Q697 478 696 468L698 431L697 395L701 381Z",
];

const Arrow = () => (
  <svg width="6" height="4" viewBox="0 0 6 4" aria-hidden="true"><path d="M0 0h6L3 4z" fill="#111" /></svg>
);

function Node({ x, y, w, h, tone = "on", ins = [], outs = [], icon, size = 18, graft }) {
  return (
    <NodeBox $x={x} $y={y} $w={w} $h={h} $tone={tone}>
      <Ports>{ins.map((l, i) => <Port key={i} $side="left">{l}</Port>)}</Ports>
      <Glyph>{icon && <Icon name={icon} size={size} />}</Glyph>
      <Ports $out>
        {outs.map((l, i) => (
          <Port key={i} $side="right" $wide={graft}>
            {l}
            {graft && (
              <svg width="11" height="11" viewBox="0 0 11 11" aria-hidden="true" visibility={i ? "hidden" : "visible"}>
                <rect x=".5" y=".5" width="10" height="10" rx="1" fill="#ddd" stroke="#444" />
                <path d="M5.500 9V3M3 5l2.500-3L8 5" fill="none" stroke="#555" />
              </svg>
            )}
          </Port>
        ))}
      </Ports>
    </NodeBox>
  );
}

function Panel({ x, y, rows }) {
  return (
    <PanelBox $x={x} $y={y} $w={167} $h={127}>
      {rows.map(([path, v]) => (
        <React.Fragment key={path}>
          <PathRow>{path}</PathRow>
          <ItemRow>0<span>Rectangle (w={v}, h={v})</span></ItemRow>
        </React.Fragment>
      ))}
      <EdgePorts><Port $side="left" /><Port $side="right" /></EdgePorts>
    </PanelBox>
  );
}

const RHINO_TOOLS = ["bulbOff", "bulbOn", "bulbSel", "bulbInv", "bulbSwap", "|", "lock", "unlock", "lockSel", "lockInv", "lockSwap", "|", "points", "points2"];

function RhinoWindow() {
  return (
    <Rhino>
      <Title $h={20} $pad={71}>Rhinoceros (Educational) (64-bit) - [Top]</Title>
      <RhinoMenu>
        {[["编辑", "E"], ["查看", "V"], ["曲线", "C"], ["曲面", "S"], ["实体", "O"]].map(([n, k]) => (
          <PlainButton key={n}>{n}(<u>{k}</u>)</PlainButton>
        ))}
      </RhinoMenu>
      <Command>
        <History>自动保存完成</History>
        <Prompt>指令:<input aria-label="指令" /></Prompt>
      </Command>
      <RhinoTabs>
        {["标准", "工作平面", "设定视图", "显示", "选取", "工作视窗配置"].map((t) => <RhinoTab key={t}>{t}</RhinoTab>)}
      </RhinoTabs>
      <RhinoTools>
        {RHINO_TOOLS.map((n, i) =>
          n === "|" ? <Rule key={i} $m={2} /> : <ToolButton key={n} aria-label={n}><Icon name={n} size={24} /></ToolButton>
        )}
      </RhinoTools>
      <RhinoBody>
        <Palette>
          <PaletteGrid>
            {PALETTE.map((n) => (
              <ToolButton key={n} aria-label={n} $flyout={!NO_FLYOUT.includes(n)}><Icon name={n} size={24} /></ToolButton>
            ))}
          </PaletteGrid>
        </Palette>
        <ViewColumn>
          <Viewport>
            <ViewSvg aria-hidden="true">
              <path d="M0 79.500H268M0 158.500H268M0 238.500H268M0 317.500H268M0 476.500H268M128.500 0V560M208.500 0V560M0 556.500H268" stroke="#8f979f" />
              <path d="M48.500 0V560M0 397.500H268" stroke="#747b83" />
              <rect x="48.500" y="79.500" width="159" height="159" fill="#e4e5e8" stroke="#fff" />
              <rect x="48.500" y="317.500" width="159" height="159" fill="#ccd0d5" stroke="#fff" />
              <path d="M128.500 79V238M48 158.500H207M128.500 317V476M48 397.500H207" stroke="#fff" />
              <g fill="none" stroke="#fff">
                <rect x="68.500" y="99.500" width="40" height="40" /><rect x="131.500" y="83.500" width="72" height="72" />
                <rect x="76.500" y="186.500" width="24" height="24" /><rect x="139.500" y="170.500" width="56" height="56" />
              </g>
              <g fill="#9aa2ab" stroke="#fff">
                <rect x="68.500" y="337.500" width="40" height="40" /><rect x="131.500" y="321.500" width="72" height="72" />
                <rect x="76.500" y="424.500" width="24" height="24" /><rect x="139.500" y="409.500" width="56" height="55" />
              </g>
              <path d="M36.500 493V522.500H66" fill="none" stroke="#6c7279" />
              <text x="38" y="497" fontSize="13" fontFamily="Liberation Mono" fill="#44494e">y</text>
              <text x="68" y="525" fontSize="12" fontFamily="Liberation Mono" fill="#44494e">x</text>
            </ViewSvg>
            <ViewLabel>Top<svg width="10" height="11" viewBox="0 0 10 11" aria-hidden="true"><path d="M.5 0v11" stroke="#111" /><path d="M2 3h8L6 8z" fill="#111" /></svg></ViewLabel>
          </Viewport>
          <ViewTabs>
            {["Perspective", "Top", "Front", "Right"].map((t) => <ViewTab key={t} $on={t === "Top"}>{t}</ViewTab>)}
            <ViewTab aria-label="New viewport">
              <svg width="9" height="9" viewBox="0 0 9 9" aria-hidden="true"><path d="M3.500.5h2v3h3v2h-3v3h-2v-3h-3v-2h3z" fill="#fff" stroke="#444" /></svg>
            </ViewTab>
          </ViewTabs>
        </ViewColumn>
      </RhinoBody>
      <RhinoStatus>
        <StatusCell $w={71} $cjk>工作平面</StatusCell>
        <StatusCell $w={88}>x 0.524</StatusCell>
        <StatusCell $w={88}>y -0.522</StatusCell>
        <StatusCell $w={88}>z 0.000</StatusCell>
      </RhinoStatus>
      <Watermark><Ribbon><span>xuexiniu</span>学犀牛中文网</Ribbon></Watermark>
    </Rhino>
  );
}

const DOCK = [
  ["sketch", "#f6c445"], ["darktree", "#c9c9c9"], ["sprout"], ["down", "#d6d6d6"], ["nums"],
  ["item"], ["waves"], ["swirl"], ["ab"], ["hexnum"],
];
const VALUES = ["0.3", "0.5", "0.7", "0.9"];

export default function App() {
  return (
    <Desktop>
      <Global />
      <Windows>
        <RhinoWindow />
        <Hopper>
          <Title $h={22} $pad={0}>
            Grasshopper - boundary surfaces*
            <WinButtons>
              <WinButton aria-label="Minimize" /><WinButton aria-label="Maximize" /><WinButton aria-label="Close" />
            </WinButtons>
          </Title>
          <HopperMenu>
            {["File", "Edit", "View", "Display", "Solution", "Help"].map((m) => <MenuItem key={m} $on={m === "File"}>{m}</MenuItem>)}
            <DocName>boundary surfaces*</DocName>
          </HopperMenu>
          <Tabs>
            {["Params", "Maths", "Sets", "Vector", "Curve", "Surface", "Mesh", "Intersect", "Transform", "Display", "Wb", "Kangaroo", "LunchBox", "Extra"].map((t) => (
              <Tab key={t} $on={t === "Sets"}>{t}</Tab>
            ))}
          </Tabs>
          <Groups>
            {GROUPS.map(([name, cols, icons]) => (
              <Group key={name}>
                <GroupGrid $cols={cols}>
                  {icons.split(" ").map((n) => <ToolButton key={n} aria-label={n}><Icon name={n} size={23} /></ToolButton>)}
                </GroupGrid>
                <GroupName>
                  {name}
                  <svg width="8" height="8" viewBox="0 0 8 8" aria-hidden="true"><path d="M4 0v7M1 4l3 3 3-3" fill="none" stroke="#ddd" strokeWidth="1.500" /></svg>
                </GroupName>
              </Group>
            ))}
          </Groups>
          <ToolBar>
            <BarButton aria-label="Open"><Icon name="open" size={22} /></BarButton>
            <BarButton aria-label="Save"><Icon name="save" size={24} /></BarButton>
            <Rule $m={3} />
            <ZoomField>
              <select aria-label="Zoom" defaultValue="80%"><option>80%</option></select>
              <Arrow />
            </ZoomField>
            <BarButton aria-label="Zoom extents"><Icon name="focus" size={22} /><Arrow /></BarButton>
            <BarButton aria-label="Preview" $p={2}><Icon name="eye" size={24} /><Arrow /></BarButton>
            <BarButton aria-label="Sketch"><Icon name="pencil" size={22} /></BarButton>
            <Push />
            <BarButton aria-label="No preview"><Icon name="canGhost" size={22} /></BarButton>
            <BarButton aria-label="Wireframe" $p={2}><Icon name="canWire" size={24} /></BarButton>
            <BarButton aria-label="Shaded" $on $p={1}><Icon name="canRed" size={24} /></BarButton>
            <Rule $m={7} />
            <BarButton aria-label="Selected only" $p={2}><Icon name="canGreen" size={24} /></BarButton>
            <BarButton aria-label="Document preview" $p={2}><Icon name="half" size={22} /></BarButton>
            <Rule $m={4} />
            <BarButton aria-label="Mesh quality" $p={2}><Icon name="ball" size={20} /><Arrow /></BarButton>
          </ToolBar>
          <Canvas>
            <Layer aria-hidden="true">
              <g fill="none">
                {ORANGE.map((d) => <path key={d} d={d} stroke="#e8633c" strokeWidth="2.500" />)}
                {SOLID.map((d) => (
                  <g key={d}><path d={d} stroke="#4c4c4c" strokeWidth="4" /><path d={d} stroke="#bdbab3" strokeWidth="1.500" /></g>
                ))}
                {DASHED.map((d) => (
                  <g key={d} strokeLinecap="round" strokeDasharray="7 7">
                    <path d={d} stroke="#4a4a4a" strokeWidth="4.500" /><path d={d} stroke="#b5b2ab" strokeWidth="1.800" />
                  </g>
                ))}
                <path d="M22 279H31M890 377C906 377 872 340 888 340M826 377H829" stroke="#4c4c4c" strokeWidth="2.500" />
              </g>
            </Layer>
            <Node x={106} y={3} w={57} h={52} tone="off" ins={["G", "C", "F"]} outs={["G", "X"]} icon="scaleOff" />
            <Node x={181} y={5} w={53} h={24} tone="off" ins={["E"]} outs={["S"]} icon="bsrfOff" />
            <Node x={259} y={-20} w={54} h={23} tone="off" />
            <Node x={34} y={62} w={55} h={36} tone="off" ins={["D", "N"]} outs={["R"]} icon="range" />
            <Node x={-25} y={71} w={43} h={36} tone="off" outs={["R"]} />
            <Node x={239} y={159} w={53} h={23} ins={["T"]} outs={["T"]} icon="sprout" />
            <Node x={225} y={203} w={70} h={52} ins={["G", "C", "F"]} outs={["G", "X"]} icon="scale" graft />
            <Node x={35} y={252} w={55} h={37} tone="hidden" ins={["D", "N"]} outs={["R"]} icon="range" />
            <Node x={-24} y={261} w={43} h={37} outs={["R"]} />
            <NodeBox $x={443} $y={311} $w={101} $h={33} $tone="hidden">
              <Mapper>
                <MapField $grow={42}>{"(A;B;C)"}</MapField>
                <svg width="10" height="10" viewBox="0 0 10 10" aria-hidden="true"><path d="M1 3.500h4V1l4 4-4 4V6.500H1z" fill="#3f74c9" stroke="#102a5c" /></svg>
                <MapField $grow={33}>{"(A;C)"}</MapField>
              </Mapper>
              <EdgePorts><Port $side="left" /><Port $side="right" /></EdgePorts>
            </NodeBox>
            <Node x={752} y={157} w={53} h={23} ins={["E"]} outs={["S"]} icon="bsrf" />
            <Node x={758} y={312} w={53} h={23} ins={["E"]} outs={["S"]} icon="bsrf" />
            <Node x={893} y={314} w={57} h={36} ins={["G", "T"]} outs={["G", "X"]} icon="moveTo" />
            <Node x={833} y={365} w={53} h={24} tone="hidden" ins={["F"]} outs={["V"]} icon="unity" size={20} />
            <PanelBox $x={771} $y={368} $w={53} $h={18}>
              <Short>-3</Short>
              <EdgePorts><Port $side="left" /><Port $side="right" /></EdgePorts>
            </PanelBox>
            <Panel x={358} y={33} rows={[0, 1, 2, 3].map((i) => [`{0;${i}}`, "1.0"])} />
            <Panel x={298} y={378} rows={VALUES.map((v, i) => [`{0;0;${i}}`, v])} />
            <Panel x={577} y={377} rows={VALUES.map((v, i) => [`{0;${i}}`, v])} />
            <Layer aria-hidden="true">
              {MARKS.map((d) => <path key={d} d={d} fill="none" stroke="#e01010" strokeWidth="3" strokeLinejoin="round" />)}
            </Layer>
            <Dock>
              {DOCK.map(([n, bg]) => <DockButton key={n} aria-label={n} $bg={bg}><Icon name={n} size={22} /></DockButton>)}
            </Dock>
            <Compass viewBox="0 0 56 46" aria-hidden="true">
              <defs><radialGradient id="dial"><stop offset="0" stopColor="#eee" /><stop offset="1" stopColor="#a8a8a8" /></radialGradient></defs>
              <circle cx="33" cy="23" r="19.500" fill="url(#dial)" stroke="#222" />
              <circle cx="33" cy="23" r="18" fill="none" stroke="#fff" strokeWidth="2" />
              <path d="M37 6l6 2-4 4zM50 27l-1 7-4-4zM29 40l-7-2 4-4zM16 19l1-7 4 4z" fill="#fff" />
              <path d="M3 13l5-5 6 4-4 5z" fill="#000" /><path d="M10 12l6 4" stroke="#000" />
            </Compass>
          </Canvas>
          <Status>
            <Icon name="info" size={18} />
            Autosave complete (34 seconds ago)
            <Version>0.9.0075</Version>
            <svg width="11" height="11" viewBox="0 0 11 11" aria-hidden="true"><path d="M8 0h2v2h-2zM4 4h2v2h-2zM8 4h2v2h-2zM0 8h2v2h-2zM4 8h2v2h-2zM8 8h2v2h-2z" fill="#888" /></svg>
          </Status>
        </Hopper>
      </Windows>
      <Taskbar><Orb /></Taskbar>
    </Desktop>
  );
}
